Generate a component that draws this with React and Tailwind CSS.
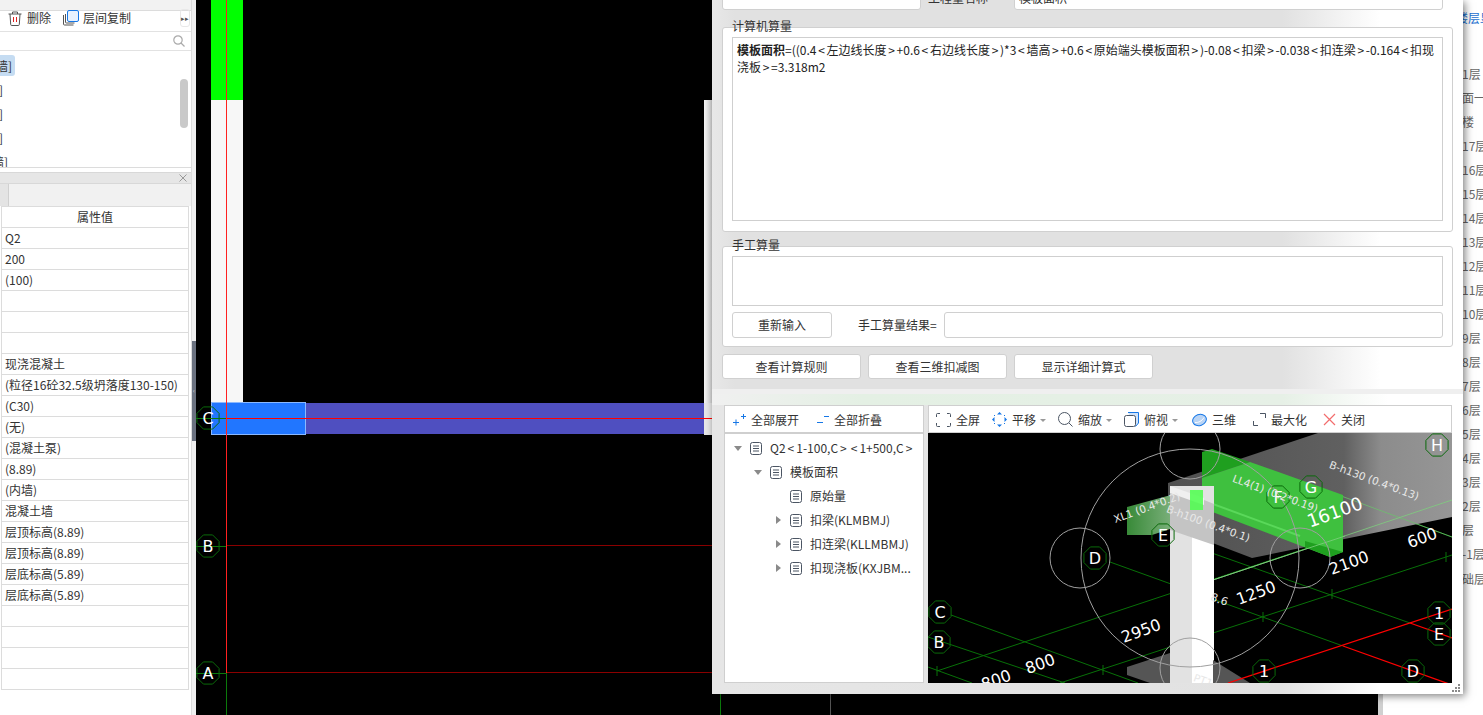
const propValues = [
  "Q2", "200", "(100)", "", "", "", "现浇混凝土", "(粒径16砼32.5级坍落度130-150)", "(C30)", "(无)", "(混凝土泵)",
  "(8.89)", "(内墙)", "混凝土墙", "层顶标高(8.89)", "层顶标高(8.89)", "层底标高(5.89)", "层底标高(5.89)", "", "", "", "",
];

const floors = [
  "第1层", "屋面一", "阁楼", "第17层", "第16层", "第15层", "第14层", "第13层", "第12层", "第11层", "第10层",
  "第9层", "第8层", "第7层", "第6层", "第5层", "第4层", "第3层", "第2层", "首层", "第-1层", "基础层",
];

const octagon = (cx, cy, r) =>
  [...Array(8)]
    .map((_, i) => {
      const a = Math.PI / 8 + (i * Math.PI) / 4;
      return `${cx + r * Math.cos(a)},${cy + r * Math.sin(a)}`;
    })
    .join(" ");

const AxisMark = ({ x, y, label, r = 12 }) => (
  <g>
    <polygon points={octagon(x, y, r)} fill="none" stroke="#0a6a0a" strokeWidth="1" />
    <text x={x} y={y + 6} textAnchor="middle" fontSize="16" fill="#fff" fontFamily="DejaVu Sans, sans-serif">
      {label}
    </text>
  </g>
);

const Label3d = ({ x, y, rot, size = 10.5, fill = "#e8e8e8", children }) => (
  <text
    x={x}
    y={y}
    textAnchor="middle"
    fontSize={size}
    fill={fill}
    fontFamily="DejaVu Sans, sans-serif"
    transform={`rotate(${rot} ${x} ${y})`}
  >
    {children}
  </text>
);

// the angle brackets sit wider in the original font
const Lt = () => <span className="mx-[1.7px]">&lt;</span>;
const Gt = () => <span className="mx-[1.7px]">&gt;</span>;

const DocIcon = () => (
  <svg className="shrink-0" width="12" height="13" viewBox="0 0 12 13" fill="none" stroke="#4b5563" strokeWidth="1">
    <rect x="0.5" y="0.5" width="11" height="12" rx="2" />
    <path d="M3 4h6M3 6.5h6M3 9h6" />
  </svg>
);

const TreeRow = ({ indent, arrow, children }) => (
  <div className="flex h-[24px] items-center whitespace-nowrap" style={{ paddingLeft: indent }}>
    <span className="flex w-[16px] shrink-0 justify-start">
      {arrow === "open" && <span className="mt-[1px] h-0 w-0 border-x-[4px] border-t-[5px] border-x-transparent border-t-[#8a8a8a]" />}
      {arrow === "closed" && <span className="ml-[2px] h-0 w-0 border-y-[4px] border-l-[5px] border-y-transparent border-l-[#8a8a8a]" />}
    </span>
    <DocIcon />
    <span className="ml-[8px]">{children}</span>
  </div>
);

const ToolItem = ({ icon, label, caret, className = "" }) => (
  <span className={`flex items-center gap-[5px] whitespace-nowrap ${className}`}>
    {icon}
    <span>{label}</span>
    {caret && <span className="-ml-[1px] mt-[1px] h-0 w-0 border-x-[3px] border-t-[3px] border-x-transparent border-t-[#999]" />}
  </span>
);

const GrayButton = ({ className = "", children }) => (
  <div className={`flex h-[25px] items-center justify-center rounded-[3px] border border-[#d0d0d0] bg-white ${className}`}>
    {children}
  </div>
);

const LeftPanel = () => (
  <div className="flex h-full w-[192px] shrink-0 flex-col overflow-hidden border-r border-[#dcdcdc] bg-white">
    <div className="h-[11px] shrink-0 border-b border-[#dcdcdc] bg-[#f2f2f2]" />
    <div className="flex h-[21px] shrink-0 items-center border-b border-[#e2e2e2] pb-[6px] pl-[8px]">
      <svg width="14" height="15" viewBox="0 0 14 15" fill="none" stroke="#555" strokeWidth="1">
        <path d="M0.5 3h13M4.5 3V1h5v2M2 3l.7 10.5a1 1 0 0 0 1 1h6.6a1 1 0 0 0 1-1L12 3" />
        <path d="M5.5 6v5M8.5 6v5" stroke="#e02020" />
      </svg>
      <span className="ml-[5px]">删除</span>
      <svg className="ml-[12px]" width="16" height="16" viewBox="0 0 16 16" fill="none">
        <path d="M0.5 5v9a1 1 0 0 0 1 1h9" stroke="#555" />
        <path d="M2.5 4v8a1 1 0 0 0 1 1h8" stroke="#555" />
        <rect x="4.5" y="0.5" width="11" height="11" rx="1.5" fill="#e6f1ff" stroke="#1677e6" />
      </svg>
      <span className="ml-[4px]">层间复制</span>
      <span className="ml-auto mr-[1px] flex h-[18px] w-[10px] items-center justify-center rounded-[3px] border border-[#e8e8e8] text-[7px] leading-none text-[#555]">
        ▸▸
      </span>
    </div>
    <div className="flex h-[19px] shrink-0 items-center justify-end border-b border-[#e2e2e2] pr-[6px]">
      <svg width="12" height="12" viewBox="0 0 12 12" fill="none" stroke="#aaa" strokeWidth="1.2">
        <circle cx="5" cy="5" r="4.2" />
        <path d="M8 8l3.5 3.5" />
      </svg>
    </div>
    <div className="relative h-[117px] shrink-0 overflow-hidden border-b border-[#dcdcdc]">
      <div className="ml-[-10px] flex flex-col gap-[3px] pt-[4px] leading-[21px]">
        <span className="h-[21px] w-[25px] rounded-[3px] bg-[#c5dcf2] pr-[3px] text-right">墙]</span>
        <span className="h-[21px] pl-[9px]">]</span>
        <span className="h-[21px] pl-[9px]">]</span>
        <span className="h-[21px] pl-[9px]">]</span>
        <span className="h-[21px] w-[18px] text-right">墙]</span>
      </div>
      <div className="absolute left-[180px] top-[28px] h-[49px] w-[8px] rounded bg-[#c9c9c9]" />
    </div>
    <div className="h-[4px] shrink-0" />
    <div className="flex h-[12px] shrink-0 items-center justify-end border-y border-[#d8d8d8] bg-[#e6e6e6] pr-[4px]">
      <svg width="8" height="8" viewBox="0 0 8 8" stroke="#999" strokeWidth="1">
        <path d="M0.5 0.5l7 7M7.5 0.5l-7 7" />
      </svg>
    </div>
    <div className="flex h-[22px] shrink-0 bg-[#f1f1f1]">
      <div className="w-[9px] border-r border-[#d0d0d0] bg-[#e4e4e4]" />
    </div>
    <div className="ml-[1px] w-[188px] border-x border-[#dcdcdc]">
      <div className="flex h-[22px] items-center justify-center border-y border-[#dcdcdc]">属性值</div>
      {propValues.map((v, i) => (
        <div key={i} className="flex h-[21px] items-center truncate border-b border-[#dcdcdc] pl-[3px]">
          {v}
        </div>
      ))}
    </div>
  </div>
);

const Splitter = () => (
  <div className="flex h-full w-[4px] shrink-0 items-start bg-[#f0f0f0] pt-[341px]">
    <div className="flex h-[100px] w-[4px] items-center justify-center bg-[#6b7280] text-[6px] leading-none text-[#ddd]">‹</div>
  </div>
);

const PlanCanvas = () => (
  <div className="h-full min-w-0 flex-1 bg-black">
    <svg width="100%" height="100%" viewBox="196 0 1182 715">
      <defs>
        <linearGradient id="wallEdge" x1="0" x2="1" y1="0" y2="0">
          <stop offset="0" stopColor="#f6f6f6" />
          <stop offset="1" stopColor="#d4d4d4" />
        </linearGradient>
      </defs>
      <rect x="211" y="0" width="32" height="100" fill="#00ff00" />
      <rect x="211" y="100" width="32" height="302" fill="#f7f7f7" />
      <rect x="704" y="100" width="8" height="303" fill="url(#wallEdge)" />
      <rect x="704" y="403" width="8" height="32" fill="#e8e8e8" />
      <rect x="306" y="403" width="398" height="31" fill="#4f4fc0" />
      <rect x="211.5" y="402.5" width="94" height="32" fill="#2176ff" stroke="#8ab8ff" />
      <line x1="196" y1="418.5" x2="227" y2="418.5" stroke="#0b7a0b" />
      <line x1="196" y1="546.5" x2="227" y2="546.5" stroke="#0b7a0b" />
      <line x1="196" y1="673.5" x2="227" y2="673.5" stroke="#0b7a0b" />
      <line x1="227" y1="418.5" x2="712" y2="418.5" stroke="#ff0000" />
      <line x1="227" y1="545.5" x2="712" y2="545.5" stroke="#8b0000" />
      <line x1="227" y1="672.5" x2="712" y2="672.5" stroke="#8b0000" />
      <line x1="226.5" y1="0" x2="226.5" y2="673" stroke="#ff2020" />
      <line x1="226.5" y1="673" x2="226.5" y2="715" stroke="#0b7a0b" />
      <line x1="720.5" y1="694" x2="720.5" y2="715" stroke="#0b7a0b" />
      <line x1="830.5" y1="694" x2="830.5" y2="715" stroke="#555" />
      <AxisMark x={208} y={418} label="C" />
      <AxisMark x={208} y={546} label="B" />
      <AxisMark x={208} y={673} label="A" />
    </svg>
  </div>
);

const View3d = () => (
  <svg className="block" width="524" height="250" viewBox="928 433 524 250">
    <defs>
      <linearGradient id="slab" x1="1168" x2="1452" y1="0" y2="0" gradientUnits="userSpaceOnUse">
        <stop offset="0" stopColor="#505050" />
        <stop offset="0.62" stopColor="#606060" />
        <stop offset="0.75" stopColor="#8c8c8c" />
        <stop offset="1" stopColor="#969696" />
      </linearGradient>
      <linearGradient id="xl" x1="1127" x2="1182" y1="0" y2="0" gradientUnits="userSpaceOnUse">
        <stop offset="0" stopColor="#388a38" />
        <stop offset="1" stopColor="#8ab88a" />
      </linearGradient>
    </defs>
    <rect x="928" y="433" width="524" height="250" fill="#000" />

    {/* grid */}
    <g stroke="#087008" strokeWidth="1" fill="none">
      <line x1="951" y1="615" x2="1138" y2="683" />
      <line x1="928" y1="637" x2="1065" y2="683" />
      <line x1="928" y1="667" x2="972" y2="683" />
      <line x1="1110" y1="562" x2="1343" y2="646" />
      <line x1="1175" y1="540" x2="1410" y2="623" />
      <line x1="1325" y1="490" x2="1452" y2="537" />
      <line x1="937" y1="671" x2="1452" y2="500" />
      <line x1="1060" y1="683" x2="1452" y2="555" />
      <path d="M937 666v10M1103 665v10M1263 612v10M1332 589v10M1446 552v10" />
    </g>

    {/* slabs */}
    <polygon points="1168,483 1318,433 1452,433 1452,517 1252,558 1168,526" fill="url(#slab)" />
    <line x1="1325" y1="490" x2="1452" y2="537" stroke="#6fbf6f" opacity="0.8" />
    <line x1="1213" y1="580" x2="1452" y2="500" stroke="#7fcf7f" opacity="0.8" />

    {/* beam */}
    <polygon points="1202,452 1212,449 1250,462 1202,478" fill="#1f9f1f" />
    <polygon points="1202,478 1250,462 1343,495 1343,552 1330,557 1202,508" fill="#3fc03f" />
    <polygon points="1305,547 1330,557 1343,552 1305,541" fill="#1f9f1f" />
    <line x1="1202" y1="500" x2="1300" y2="536" stroke="#5ad85a" strokeWidth="2" />
    <line x1="1213" y1="580" x2="1345" y2="536" stroke="#7fcf7f" opacity="0.8" />

    {/* column and short beam */}
    <polygon points="1127,507 1182,492 1182,525 1152,535 1127,535" fill="url(#xl)" />
    <rect x="1170" y="486" width="44" height="197" fill="#e2e2e2" />
    <rect x="1192" y="530" width="22" height="153" fill="#fff" />
    <polygon points="1170,490 1204,500 1214,504 1214,545 1170,530" fill="#c4c4c4" />
    <polygon points="1170,486 1204,498 1204,505 1170,493" fill="#f0f0f0" />
    <rect x="1190" y="490" width="13" height="20" fill="#4cff4c" opacity="0.85" />
    <polygon points="1127,667 1170,653 1170,683 1150,683 1127,675" fill="#555" />
    <polygon points="1213,660 1250,683 1213,683" fill="#555" />

    {/* circles */}
    <g stroke="#a0a0a0" strokeWidth="1" fill="none">
      <circle cx="1190" cy="558" r="109" />
      <circle cx="1080" cy="558" r="30" />
      <circle cx="1190" cy="449" r="30" />
      <circle cx="1190" cy="668" r="30" />
      <circle cx="1300" cy="558" r="30" />
    </g>

    {/* red axis */}
    <g stroke="#ff0000" strokeWidth="1.3">
      <line x1="1228" y1="683" x2="1452" y2="609" />
      <line x1="1343" y1="646" x2="1452" y2="685" />
      <line x1="1410" y1="623" x2="1452" y2="638" />
    </g>

    <AxisMark x={1437} y={445} label="H" />
    <AxisMark x={1311} y={487} label="G" />
    <AxisMark x={1278} y={497} label="F" />
    <AxisMark x={1163} y={535} label="E" />
    <AxisMark x={1095} y={558} label="D" />
    <AxisMark x={940} y={612} label="C" />
    <AxisMark x={939} y={642} label="B" />
    <AxisMark x={1439} y={613} label="1" />
    <AxisMark x={1439} y={634} label="E" />
    <AxisMark x={1413} y={671} label="D" />
    <AxisMark x={1264} y={671} label="1" />

    <Label3d x={1143} y={636} rot={-20} size={16} fill="#fff">2950</Label3d>
    <Label3d x={1042} y={669} rot={-20} size={16} fill="#fff">800</Label3d>
    <Label3d x={998} y={685} rot={-20} size={16} fill="#fff">800</Label3d>
    <Label3d x={1258} y={598} rot={-20} size={16} fill="#fff">1250</Label3d>
    <Label3d x={1351} y={568} rot={-20} size={16} fill="#fff">2100</Label3d>
    <Label3d x={1424} y={543} rot={-20} size={16} fill="#fff">600</Label3d>
    <Label3d x={1337} y={518} rot={-20} size={18} fill="#fff">16100</Label3d>
    <Label3d x={1218} y={603} rot={20} size={11}>8.6</Label3d>
    <Label3d x={1373} y={484} rot={20}>B-h130 (0.4*0.13)</Label3d>
    <Label3d x={1274} y={497} rot={20}>LL4(1) (0.2*0.19)</Label3d>
    <Label3d x={1207} y={527} rot={20}>B-h100 (0.4*0.1)</Label3d>
    <Label3d x={1148} y={511} rot={-20}>XL1 (0.4*0.2)</Label3d>
    <Label3d x={1202} y={684} rot={20}>PT1</Label3d>
  </svg>
);

const QuantityDialog = () => (
  <div className="absolute left-[712px] top-0 h-[694px] w-[751px] overflow-hidden bg-white shadow-[2px_2px_8px_rgba(0,0,0,0.5)]">
    <div className="bg-[linear-gradient(90deg,#e8e8e8_0%,#e1e1e1_3%,#e1e1e1_76%,#ffffff_89%)] px-[10px] pb-[10px]">
      <div className="-mt-[20px] flex h-[30px] items-center">
        <div className="h-full w-[199px] rounded-[3px] border border-[#d0d0d0] bg-white" />
        <span className="ml-[7px] mt-[6px] w-[86px]">工程量名称</span>
        <div className="flex h-full w-[429px] items-center rounded-[3px] border border-[#d0d0d0] bg-white pl-[4px] pt-[6px]">模板面积</div>
      </div>

      <div className="relative mt-[17px] h-[205px] rounded-[3px] border border-[#d0d0d0] bg-white p-[9px]">
        <span className="absolute left-[9px] top-[-11px] leading-[17px]">计算机算量</span>
        <div className="h-[184px] border border-[#cfcfcf] px-[4px] pt-[3px] leading-[17px] text-[#222]">
          <b>模板面积</b>=((0.4<Lt />左边线长度<Gt />+0.6<Lt />右边线长度<Gt />)*3<Lt />墙高<Gt />+0.6<Lt />原始端头模板面积<Gt />)-0.08<Lt />扣梁<Gt />-0.038<Lt />扣连梁<Gt />-0.164<Lt />扣现浇板<Gt />=3.318m2
        </div>
      </div>

      <div className="relative mt-[14px] h-[101px] rounded-[3px] border border-[#d0d0d0] bg-white p-[9px]">
        <span className="absolute left-[9px] top-[-11px] leading-[17px]">手工算量</span>
        <div className="h-[50px] border border-[#cfcfcf]" />
        <div className="mt-[6px] flex h-[26px] items-center">
          <GrayButton className="h-[26px] w-[100px]">重新输入</GrayButton>
          <span className="ml-[26px] w-[86px]">手工算量结果=</span>
          <div className="h-[26px] flex-1 rounded-[3px] border border-[#d0d0d0] bg-white" />
        </div>
      </div>

      <div className="mt-[7px] flex gap-[7px]">
        <GrayButton className="w-[139px]">查看计算规则</GrayButton>
        <GrayButton className="w-[139px]">查看三维扣减图</GrayButton>
        <GrayButton className="w-[139px]">显示详细计算式</GrayButton>
      </div>
    </div>

    <div className="h-[5px] bg-[#efefef]" />

    <div className="relative h-[300px] bg-[linear-gradient(90deg,#e6e6e6_0%,#e2e2e2_76%,#ffffff_89%)]">
      <div className="h-[11px] bg-[linear-gradient(90deg,#f0f0f0_0%,#e4f0e4_20%,#e6f0e6_76%,#ffffff_90%)]" />
      <div className="flex gap-[4px] pl-[12px]">
        <div className="h-[278px] w-[200px] border border-[#cfcfcf] bg-white">
          <div className="flex h-[28px] items-center border-b-2 border-[#cfcfcf] pl-[8px] pt-[1px]">
            <ToolItem
              label="全部展开"
              icon={
                <svg width="13" height="13" viewBox="0 0 13 13" stroke="#1677e6" strokeWidth="1">
                  <path d="M0 9.5h6M3 6.5v6M8 3.5h5M10.5 1v5" />
                </svg>
              }
            />
            <ToolItem
              className="ml-[18px]"
              label="全部折叠"
              icon={
                <svg width="12" height="13" viewBox="0 0 12 13" stroke="#1677e6" strokeWidth="1">
                  <path d="M0 9.5h6M7 3.5h5" />
                </svg>
              }
            />
          </div>
          <div className="pt-[2px]">
            <TreeRow indent={9} arrow="open">
              Q2<span className="mx-[2px]">&lt;</span>1-100,C<span className="mx-[2px]">&gt;</span><span className="mx-[2px]">&lt;</span>1+500,C<span className="mx-[2px]">&gt;</span>
            </TreeRow>
            <TreeRow indent={29} arrow="open">模板面积</TreeRow>
            <TreeRow indent={49}>原始量</TreeRow>
            <TreeRow indent={49} arrow="closed">扣梁(KLMBMJ)</TreeRow>
            <TreeRow indent={49} arrow="closed">扣连梁(KLLMBMJ)</TreeRow>
            <TreeRow indent={49} arrow="closed">扣现浇板(KXJBM...</TreeRow>
          </div>
        </div>

        <div className="h-[278px] w-[524px] bg-white">
          <div className="flex h-[28px] items-center border border-[#cfcfcf] pl-[7px] pt-[1px]">
            <ToolItem
              label="全屏"
              icon={
                <svg width="15" height="14" viewBox="0 0 15 14" fill="none" stroke="#4b5563">
                  <path d="M.5 4V1.5a1 1 0 0 1 1-1H4M11 .5h2.5a1 1 0 0 1 1 1V4M14.5 10v2.5a1 1 0 0 1-1 1H11M4 13.5H1.5a1 1 0 0 1-1-1V10" />
                </svg>
              }
            />
            <ToolItem
              className="ml-[12px]"
              label="平移"
              caret
              icon={
                <svg width="15" height="15" viewBox="0 0 15 15" fill="#1677e6" stroke="none">
                  <path d="M7.5 0l2.5 2.5H5zM7.5 15L5 12.500h5zM0 7.500L2.500 5v5zM15 7.500L12.500 10V5z" />
                  <path d="M3 3l-1 1M12 3l1 1M3 12l-1-1M12 12l1-1" fill="none" stroke="#1677e6" />
                </svg>
              }
            />
            <ToolItem
              className="ml-[12px]"
              label="缩放"
              caret
              icon={
                <svg width="15" height="15" viewBox="0 0 15 15" fill="none" stroke="#4b5563">
                  <circle cx="6.500" cy="6.500" r="6" />
                  <path d="M11 11l3.500 3.500" />
                </svg>
              }
            />
            <ToolItem
              className="ml-[12px]"
              label="俯视"
              caret
              icon={
                <svg width="15" height="15" viewBox="0 0 15 15" fill="none" stroke="#4b5563">
                  <path d="M4 .5h10.500V11l-3 3.500" stroke="#1677e6" fill="#cfe3fb" />
                  <rect x="0.500" y="3.500" width="11" height="11" rx="2" fill="#fff" />
                </svg>
              }
            />
            <ToolItem
              className="ml-[14px]"
              label="三维"
              icon={
                <svg width="15" height="14" viewBox="0 0 15 14" fill="#b9d4f5" stroke="#1677e6">
                  <ellipse cx="7.500" cy="7" rx="7" ry="5.500" transform="rotate(-20 7.500 7)" />
                  <path d="M3 9.500c3 .5 7-1.500 9-5" fill="none" stroke="#fff" />
                </svg>
              }
            />
            <ToolItem
              className="ml-[17px]"
              label="最大化"
              icon={
                <svg width="13" height="13" viewBox="0 0 13 13" fill="none" stroke="#4b5563">
                  <path d="M7 .5h5.500V5M.5 8v4.500H5" />
                </svg>
              }
            />
            <ToolItem
              className="ml-[16px]"
              label="关闭"
              icon={
                <svg width="13" height="13" viewBox="0 0 13 13" stroke="#f26d6d" strokeWidth="1.2">
                  <path d="M1 1l11 11M12 1L1 12" />
                </svg>
              }
            />
          </div>
          <View3d />
        </div>
      </div>
      <svg className="absolute right-[3px] bottom-[2px]" width="8" height="8" viewBox="0 0 8 8" fill="#8a8a8a">
        <path d="M6 0h2v2H6zM3 3h2v2H3zM6 3h2v2H6zM0 6h2v2H0zM3 6h2v2H3zM6 6h2v2H6z" />
      </svg>
    </div>
  </div>
);

const FloorPanel = () => (
  <div className="h-full w-[105px] shrink-0 overflow-hidden border-l-[5px] border-[#d0d0d0] bg-white pl-[67px] text-[#666]">
    <div className="ml-[1px] flex h-[36px] items-center whitespace-nowrap pl-[5px] text-[#1a6fd0]">楼层显示</div>
    <div className="h-[25.5px]" />
    {floors.map((f) => (
      <div key={f} className="flex h-[24.06px] items-center whitespace-nowrap">
        {f}
      </div>
    ))}
  </div>
);

export default function App() {
  return (
    <div className="relative flex h-[715px] w-[1483px] overflow-hidden bg-white font-['Noto_Sans_CJK_SC','Liberation_Sans',sans-serif] text-[12px] text-[#333]">
      <LeftPanel />
      <Splitter />
      <PlanCanvas />
      <FloorPanel />
      <QuantityDialog />
    </div>
  );
}
